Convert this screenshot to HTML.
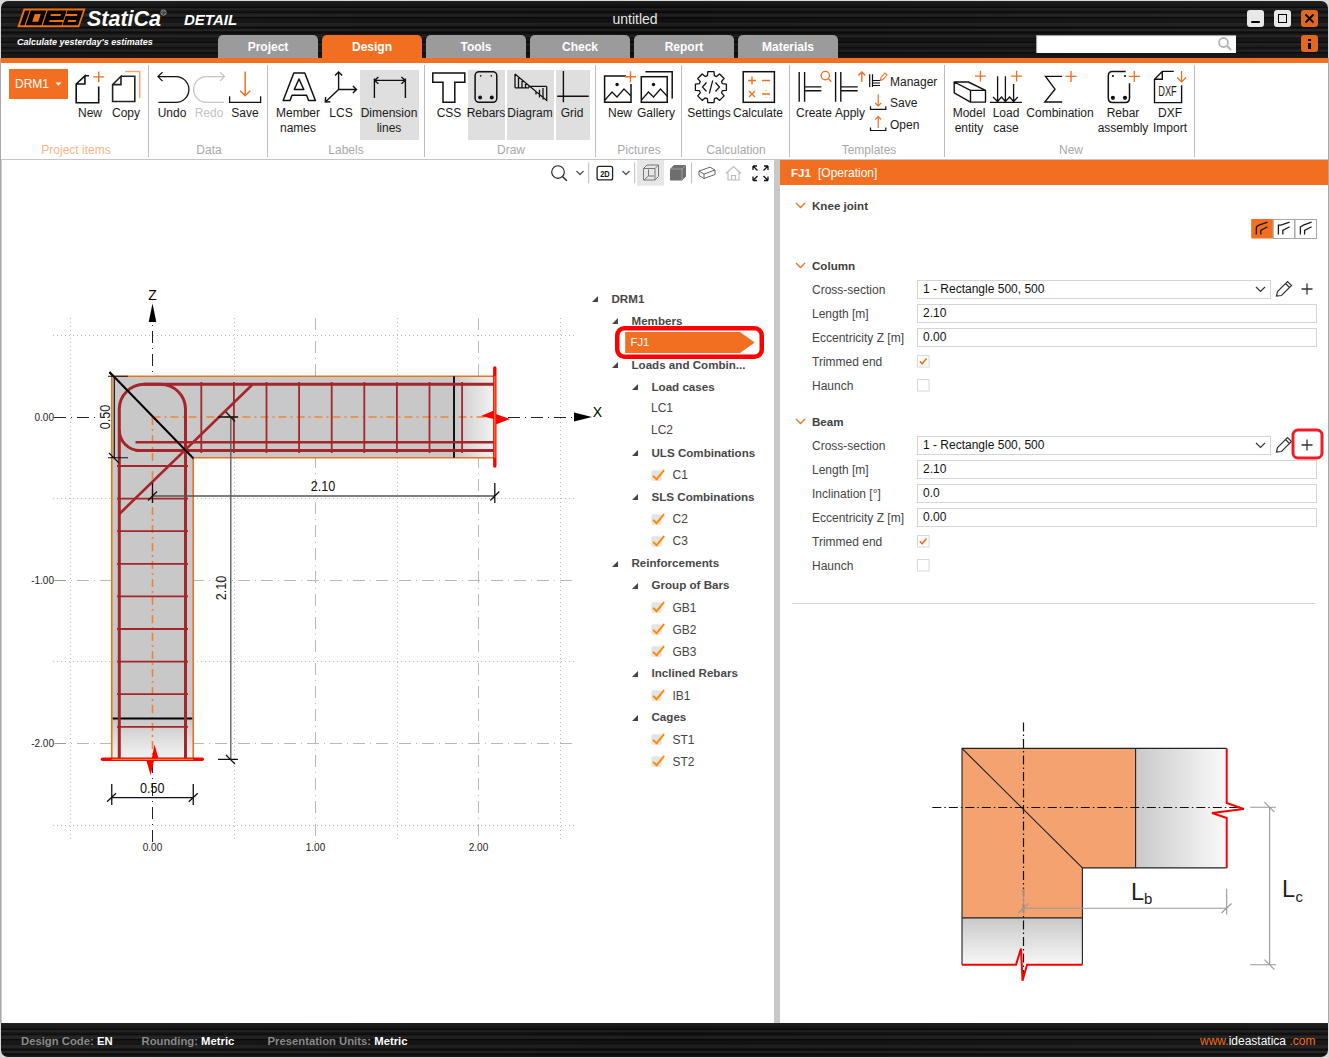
<!DOCTYPE html>
<html><head><meta charset="utf-8">
<style>
*{margin:0;padding:0;box-sizing:border-box}
html,body{width:1329px;height:1058px;overflow:hidden;background:#d9d9d9;font-family:"Liberation Sans",sans-serif;color:#222}
.a{position:absolute}
#win{position:absolute;left:0;top:0;width:1329px;height:1058px;overflow:hidden}
.dark{background-color:#121212;background-image:repeating-linear-gradient(180deg,rgba(255,255,255,0) 0px,rgba(255,255,255,.10) 1px,rgba(255,255,255,0) 2px,rgba(255,255,255,0) 7px),repeating-linear-gradient(180deg,rgba(0,0,0,0) 0px,rgba(0,0,0,.5) 1.5px,rgba(0,0,0,0) 3px,rgba(0,0,0,0) 5px),repeating-linear-gradient(180deg,rgba(255,255,255,0) 0px,rgba(255,255,255,.06) 2px,rgba(255,255,255,0) 4px,rgba(255,255,255,0) 11px),linear-gradient(90deg,rgba(255,255,255,.03),rgba(255,255,255,0) 50%,rgba(255,255,255,.03))}
.tab{position:absolute;top:35px;height:23px;width:100px;background:#9b9b9b;border-radius:5px 5px 0 0;color:#fff;font-weight:bold;font-size:12px;text-align:center;line-height:24px}
.tab.on{background:#f26f21}
.rt{position:absolute;font-size:12px;color:#1a1a1a;text-align:center;line-height:15px;white-space:nowrap}
.grp{position:absolute;top:143px;font-size:12px;color:#a8a8a8;text-align:center;white-space:nowrap;line-height:15px}
.div{position:absolute;top:65px;width:1px;height:92px;background:#bdbdbd}
.hl{position:absolute;background:#dfdfdf}
.tree{position:absolute;font-size:12px;color:#444;white-space:nowrap;line-height:15px}
.tree.b{font-weight:bold;color:#474747;font-size:11.6px}
.tri{position:absolute;width:0;height:0;border-left:6px solid transparent;border-bottom:6px solid #444}
.cb{position:absolute;width:12px;height:12px;background:#e6e6e6;border-radius:2px}
.lbl{position:absolute;left:32px;font-size:12px;color:#333;white-space:nowrap;line-height:15px}
.inp{position:absolute;left:137px;width:400px;height:19px;border:1px solid #d0d0d0;background:#fff;font-size:12px;color:#111;padding-left:5px;line-height:17px;white-space:nowrap}
.sec{position:absolute;left:32px;font-size:12px;font-weight:bold;color:#333;line-height:15px}
.chev{position:absolute;left:16px;width:9px;height:6px}
.chk{position:absolute;left:137px;width:13px;height:13px;border:1px solid #d6d6d6;background:#fff}
</style></head><body>
<div id="win">
  <div class="a" style="left:1px;top:58px;width:1327px;height:965px;background:#fff"></div>
  <div class="a dark" style="left:1px;top:1px;width:1327px;height:57px;border-radius:7px 7px 0 0"></div>
  <div class="a" style="left:1px;top:58px;width:1327px;height:5px;background:#f26f21"></div>
    <svg class="a" style="left:0;top:0" width="240" height="58" viewBox="0 0 240 58">
    <path d="M23.6 8.5 L85.5 8.5 L79.2 27.2 L17.3 27.2 Z" fill="#f0700f"/>
    <path d="M25.03 10.5 L29.53 10.5 L24.54 25.3 L20.04 25.3 Z M30.73 10.5 L46.43 10.5 L41.44 25.3 L25.74 25.3 Z M47.63 10.5 L66.63 10.5 L61.64 25.3 L42.64 25.3 Z M67.53 10.5 L83.03 10.5 L78.04 25.3 L62.54 25.3 Z" fill="#000"/>
    <path d="M34.75 14 L40.85 14 L38.22 21.8 L32.12 21.8 Z M51.05 14 L61.05 14 L60.37 16 L50.37 16 Z M49.83 20 L63.93 20 L63.25 22 L49.15 22 Z M65.95 14 L77.55 14 L76.87 16 L65.27 16 Z M68.23 20 L76.33 20 L75.65 22 L67.55 22 Z" fill="#f0700f"/>
    <text x="87" y="26" font-family="Liberation Sans" font-weight="bold" font-style="italic" font-size="21.5" fill="#fff">StatiCa</text>
    <circle cx="163.5" cy="12.5" r="2.6" fill="none" stroke="#bbb" stroke-width="0.8"/><text x="163.5" y="14.3" font-size="4" fill="#bbb" text-anchor="middle" font-family="Liberation Sans">R</text>
    <text x="184" y="25" font-family="Liberation Sans" font-weight="bold" font-style="italic" font-size="15" fill="#fff">DETAIL</text>
    <text x="17" y="44.5" font-family="Liberation Sans" font-weight="bold" font-style="italic" font-size="9" fill="#fff">Calculate yesterday's estimates</text>
  </svg>
  <div class="a" style="left:585px;top:10px;width:100px;text-align:center;color:#e6e6e6;font-size:14px;line-height:18px">untitled</div>
  <div class="a" style="left:1247px;top:10px;width:17px;height:17px;background:#e8e8e8;border-radius:3px"><div class="a" style="left:4px;top:11px;width:9px;height:2px;background:#000;border-radius:1px"></div></div>
  <div class="a" style="left:1274px;top:10px;width:17px;height:17px;background:#e8e8e8;border-radius:3px"><div class="a" style="left:4px;top:4px;width:9px;height:9px;border:1.5px solid #000"></div></div>
  <div class="a" style="left:1301px;top:10px;width:17px;height:17px;background:#e0691f;border-radius:3px"><svg class="a" style="left:0;top:0" width="17" height="17"><path d="M4.5 4.5 L12.5 12.5 M12.5 4.5 L4.5 12.5" stroke="#000" stroke-width="1.8"/></svg></div>
  <div class="a" style="left:1036px;top:35px;width:200px;height:18px;background:#fff;box-shadow:inset 1px 1px 1px #999"><svg class="a" style="left:180px;top:1px" width="18" height="16"><circle cx="7.5" cy="6.5" r="4.5" fill="none" stroke="#b5b5b5" stroke-width="1.8"/><path d="M10.8 9.8 L15 14" stroke="#b5b5b5" stroke-width="2.2"/></svg></div>
  <div class="a" style="left:1301px;top:35px;width:17px;height:17px;background:#e0691f;border-radius:3px"><div class="a" style="left:7px;top:4px;width:3px;height:2px;background:#000"></div><div class="a" style="left:7px;top:7.5px;width:3px;height:6px;background:#000"></div></div>
  <div class="tab" style="left:218px">Project</div>
  <div class="tab on" style="left:322px">Design</div>
  <div class="tab" style="left:426px">Tools</div>
  <div class="tab" style="left:530px">Check</div>
  <div class="tab" style="left:634px">Report</div>
  <div class="tab" style="left:738px">Materials</div>

  <div class="a" style="left:1px;top:159px;width:1327px;height:1px;background:#c6c6c6"></div>
    <div class="a" style="left:9px;top:69px;width:59px;height:30px;background:#f26f21;color:#fff;font-size:12px;line-height:30px;padding-left:6px">DRM1<svg class="a" style="left:46px;top:13px" width="7" height="5"><path d="M0.5 0.5 H6.5 L3.5 3.8Z" fill="#fff"/></svg></div>
  <div class="hl" style="left:360px;top:70px;width:59px;height:70px"></div>
  <div class="hl" style="left:468px;top:70px;width:37px;height:70px"></div>
  <div class="hl" style="left:507px;top:70px;width:47px;height:70px"></div>
  <div class="hl" style="left:556px;top:70px;width:34px;height:70px"></div>
  <div class="div" style="left:148px"></div>
  <div class="div" style="left:267px"></div>
  <div class="div" style="left:424px"></div>
  <div class="div" style="left:595px"></div>
  <div class="div" style="left:681px"></div>
  <div class="div" style="left:789px"></div>
  <div class="div" style="left:944px"></div>
  <div class="div" style="left:1194px"></div>
  <svg class="a" style="left:0;top:60px" width="1329" height="100" viewBox="0 60 1329 100" fill="none" stroke="#111" stroke-width="1.6">
    <!-- New -->
    <path d="M84.9 75.8 H89 M98.7 86.5 V102.7 H76.2 V84 L84.9 75.8 V84 H76.2"/>
    <path d="M93.3 76.9 H104.1 M98.7 71.5 V82.3" stroke="#f26f21" stroke-width="1.4"/>
    <!-- Copy -->
    <path d="M121 76.3 H134.8 V101.5 H112.6 V84.6 L121 76.3 V84.6 H112.6" stroke="#222"/>
    <path d="M125.2 71.4 H139.7 V98" stroke="#f9a36e" stroke-width="1.5"/>
    <!-- Undo -->
    <path d="M158 76.6 H176 A12.9 12.9 0 0 1 176 102.4 H158.4 M162.5 72.1 L158 76.6 L162.5 81.1" stroke-width="1.3"/>
    <!-- Redo -->
    <path d="M224.5 76.6 H206.5 A12.9 12.9 0 0 0 206.5 102.4 H224 M220 72.1 L224.5 76.6 L220 81.1" stroke="#c4c4c4" stroke-width="1.3"/>
    <!-- Save -->
    <path d="M245.2 71.6 V95.8 M240.2 90.8 L245.2 95.8 L250.2 90.8" stroke="#f26f21" stroke-width="1.5"/>
    <path d="M229.6 96.2 V102.4 H260.6 V96.2" stroke-width="1.3"/>
    <!-- Member names A -->
    <path d="M293.8 73 H304.8 L315.4 100.5 H308.6 L306.6 95.3 H292 L290 100.5 H283.2 Z M294.3 89.5 H303.8 L299 79 Z" stroke-width="1.5" stroke-linejoin="round"/>
    <!-- LCS -->
    <path d="M338.6 89.5 V72 M335 75.6 L338.6 72 L342.2 75.6 M338.6 89.5 H356.5 M352.9 85.9 L356.5 89.5 L352.9 93.1 M338.6 89.5 L325.3 102.1 M325.6 97 L325.3 102.1 L330.4 101.8" stroke-width="1.4"/>
    <!-- Dimension lines -->
    <path d="M374.4 78.5 V98 M405.4 78.5 V98 M374.4 80.4 H405.4 M378.4 77 L374.6 80.4 L378.4 83.8 M401.4 77 L405.2 80.4 L401.4 83.8" stroke-width="1.4"/>
    <!-- CSS T -->
    <path d="M432.8 73 H464.8 V82.3 H454.8 V102.3 H443 V82.3 H432.8 Z" stroke-width="1.5"/>
    <!-- Rebars -->
    <rect x="475.1" y="71.7" width="21.7" height="30.6" rx="4" stroke-width="1.5"/>
    <circle cx="480.7" cy="75.9" r="0.8" fill="#111" stroke="none"/><circle cx="491.3" cy="75.9" r="0.8" fill="#111" stroke="none"/>
    <circle cx="480.1" cy="97.6" r="2" fill="#111" stroke="none"/><circle cx="491.8" cy="97.6" r="2" fill="#111" stroke="none"/>
    <!-- Diagram -->
    <path d="M515 73.9 V87.8 M515 73.9 L546.7 100.4 V86.4 M518.5 76.8 V87.8 M522 79.8 V87.8 M525.5 82.7 V87.8 M529 85.6 V87.8 M536 90.8 V94.6 M539.5 89.8 V97.5 M543 88.1 V99.5 M515 87.8 H529 M530 86.4 H546.7" stroke-width="1.3"/>
    <!-- Grid -->
    <path d="M563.4 71 V102.3 M557.2 96.2 H588.7" stroke-width="1.4"/>
    <!-- Pictures New -->
    <path d="M626 76.1 H604.6 V102.3 H631 V84" stroke-width="1.5"/>
    <circle cx="617.1" cy="84.5" r="1.7" fill="#111" stroke="none"/>
    <path d="M605 100 L612 92 L617 97 L624 89 L631 96" stroke-width="1.2"/>
    <path d="M625 76.7 H636 M630.5 71.2 V82.2" stroke="#f26f21" stroke-width="1.4"/>
    <!-- Gallery -->
    <rect x="641.3" y="76.7" width="25.9" height="25.6" stroke-width="1.5"/>
    <path d="M645.5 71.7 H672.2 V98.4" stroke-width="1.5"/>
    <circle cx="653.5" cy="84.5" r="1.7" fill="#111" stroke="none"/>
    <path d="M641.5 100 L648.5 92 L653.5 97 L660.5 89 L667 96" stroke-width="1.2"/>
    <!-- Settings gear -->
    <path d="M722.4 83.7 L726.4 84.1 L726.4 90.3 L722.4 90.7 L721.5 92.8 L724.1 95.9 L719.6 100.4 L716.5 97.8 L714.4 98.7 L714.0 102.7 L707.8 102.7 L707.4 98.7 L705.3 97.8 L702.2 100.4 L697.7 95.9 L700.3 92.8 L699.4 90.7 L695.4 90.3 L695.4 84.1 L699.4 83.7 L700.3 81.6 L697.7 78.5 L702.2 74.0 L705.3 76.6 L707.4 75.7 L707.8 71.7 L714.0 71.7 L714.4 75.7 L716.5 76.6 L719.6 74.0 L724.1 78.5 L721.5 81.6 Z" stroke-width="1.3" stroke-linejoin="round"/>
    <path d="M706.5 82.5 L702.5 87 L706.5 91.5 M715.5 82.5 L719.5 87 L715.5 91.5 M712.7 80.5 L709.3 93.5" stroke-width="1.2"/>
    <!-- Calculate -->
    <rect x="743.2" y="71.7" width="31.2" height="30.6" stroke-width="1.5"/>
    <path d="M748 80.5 H756 M752 76.5 V84.5 M762 80.5 H770 M749 91 L755 97 M755 91 L749 97 M762 94 H770 M766 90.3 V90.8 M766 97.2 V97.7" stroke="#f26f21" stroke-width="1.4"/>
    <!-- Create -->
    <path d="M799.2 72 V101.7 M804.6 72 V101.7 M804.6 86.9 H821.3 M804.6 90.7 H821.3" stroke-width="1.4"/>
    <circle cx="825.3" cy="75.6" r="4.2" stroke="#f26f21" stroke-width="1.3"/><path d="M828.3 78.6 L831.3 81.8" stroke="#f26f21" stroke-width="1.4"/>
    <!-- Apply -->
    <path d="M835.6 72 V101.7 M840.8 72 V101.7 M840.8 86.9 H857.7 M840.8 90.7 H857.7" stroke-width="1.4"/>
    <path d="M861.8 72 V82 M858.3 75.5 L861.8 72 L865.3 75.5" stroke="#f26f21" stroke-width="1.4"/>
    <!-- Manager small -->
    <path d="M869.7 74.2 V87 M872.5 74.2 V87 M872.5 80.5 H880 M872.5 83 H880 M872.5 85.5 H880" stroke-width="1.2"/>
    <path d="M880.5 80.5 L881 77.5 L885 73 L887 75 L883 79.5 Z" stroke="#f26f21" stroke-width="1.1"/>
    <!-- Save small -->
    <path d="M878.2 94.3 V106 M875.2 103 L878.2 106 L881.2 103" stroke="#f26f21" stroke-width="1.2"/>
    <path d="M870.5 106.3 V109.3 H885.8 V106.3" stroke-width="1.2"/>
    <!-- Open small -->
    <path d="M878.2 128 V116.5 M875.2 119.5 L878.2 116.5 L881.2 119.5" stroke="#f26f21" stroke-width="1.2"/>
    <path d="M870.5 127.5 V130.5 H885.8 V127.5" stroke-width="1.2"/>
    <!-- Model entity box -->
    <path d="M954.2 82 H968.4 L985.5 90.4 V102.1 H970.5 L954.2 92.8 Z M954.2 82 L970.5 90.4 H985.5 M970.5 90.4 V102.1" stroke-width="1.4" stroke-linejoin="round"/>
    <path d="M975 76.2 H985.8 M980.4 70.8 V81.6" stroke="#f26f21" stroke-width="1.3"/>
    <!-- Load case -->
    <path d="M997.6 76.2 V101.5 M1005.4 76.2 V101.5 M1013.6 84 V101.5 M993 97 L997.6 101.5 L1001.5 97 L1005.4 101.5 L1009.6 97 L1013.6 101.5 L1017.8 97 M990 102.4 H1022" stroke-width="1.3"/>
    <path d="M1011.2 76.2 H1022 M1016.6 70.8 V81.6" stroke="#f26f21" stroke-width="1.3"/>
    <!-- Combination sigma -->
    <path d="M1062.2 76.4 H1045.5 L1055 89.2 L1044.8 102 H1062.2" stroke-width="1.4"/>
    <path d="M1065.5 76.4 H1076.5 M1071 70.9 V81.9" stroke="#f26f21" stroke-width="1.4"/>
    <!-- Rebar assembly -->
    <path d="M1125.7 71.5 H1112.5 Q1108.3 71.5 1108.3 75.7 V98.2 Q1108.3 102.4 1112.5 102.4 H1125.3 Q1129.5 102.4 1129.5 98.2 V83.3" stroke-width="1.5"/>
    <circle cx="1112.9" cy="76" r="1.1" fill="#111" stroke="none"/><circle cx="1125" cy="76" r="1.1" fill="#111" stroke="none"/>
    <circle cx="1112.9" cy="97.8" r="2.1" fill="#111" stroke="none"/><circle cx="1125" cy="97.8" r="2.1" fill="#111" stroke="none"/>
    <path d="M1128.8 76.4 H1139.8 M1134.3 70.9 V81.9" stroke="#f26f21" stroke-width="1.3"/>
    <!-- DXF -->
    <path d="M1173.8 71.4 H1162.3 L1154.5 79.2 V102.6 H1181.6 V85.3 M1154.5 79.2 H1162.3 V71.4" stroke-width="1.4"/>
    <text x="1158.2" y="95.8" font-family="Liberation Sans" font-size="14" fill="#222" stroke="none" textLength="18.6" lengthAdjust="spacingAndGlyphs">DXF</text>
    <path d="M1181.6 71 V81.9 M1177.2 77.5 L1181.6 81.9 L1186 77.5" stroke="#f26f21" stroke-width="1.3"/>
  </svg>
  <div class="rt" style="left:60px;top:106px;width:60px">New</div>
  <div class="rt" style="left:96px;top:106px;width:60px">Copy</div>
  <div class="rt" style="left:142px;top:106px;width:60px">Undo</div>
  <div class="rt" style="left:179px;top:106px;width:60px;color:#c4c4c4">Redo</div>
  <div class="rt" style="left:215px;top:106px;width:60px">Save</div>
  <div class="rt" style="left:268px;top:106px;width:60px">Member<br>names</div>
  <div class="rt" style="left:311px;top:106px;width:60px">LCS</div>
  <div class="rt" style="left:359px;top:106px;width:60px">Dimension<br>lines</div>
  <div class="rt" style="left:419px;top:106px;width:60px">CSS</div>
  <div class="rt" style="left:456px;top:106px;width:60px">Rebars</div>
  <div class="rt" style="left:500px;top:106px;width:60px">Diagram</div>
  <div class="rt" style="left:542px;top:106px;width:60px">Grid</div>
  <div class="rt" style="left:590px;top:106px;width:60px">New</div>
  <div class="rt" style="left:626px;top:106px;width:60px">Gallery</div>
  <div class="rt" style="left:679px;top:106px;width:60px">Settings</div>
  <div class="rt" style="left:728px;top:106px;width:60px">Calculate</div>
  <div class="rt" style="left:784px;top:106px;width:60px">Create</div>
  <div class="rt" style="left:820px;top:106px;width:60px">Apply</div>
  <div class="rt" style="left:890px;top:75px;text-align:left">Manager</div>
  <div class="rt" style="left:890px;top:96px;text-align:left">Save</div>
  <div class="rt" style="left:890px;top:118px;text-align:left">Open</div>
  <div class="rt" style="left:939px;top:106px;width:60px">Model<br>entity</div>
  <div class="rt" style="left:976px;top:106px;width:60px">Load<br>case</div>
  <div class="rt" style="left:1020px;top:106px;width:80px">Combination</div>
  <div class="rt" style="left:1093px;top:106px;width:60px">Rebar<br>assembly</div>
  <div class="rt" style="left:1140px;top:106px;width:60px">DXF<br>Import</div>
  <div class="grp" style="left:26px;width:100px;color:#f8b48a">Project items</div>
  <div class="grp" style="left:159px;width:100px">Data</div>
  <div class="grp" style="left:296px;width:100px">Labels</div>
  <div class="grp" style="left:461px;width:100px">Draw</div>
  <div class="grp" style="left:589px;width:100px">Pictures</div>
  <div class="grp" style="left:686px;width:100px">Calculation</div>
  <div class="grp" style="left:819px;width:100px">Templates</div>
  <div class="grp" style="left:1021px;width:100px">New</div>

  <div class="a" style="left:0;top:58px;width:1px;height:965px;background:#a9a9a9"></div><div class="a" style="left:1px;top:160px;width:1px;height:863px;background:#d0d0d0"></div>
  <div class="a" style="left:774px;top:160px;width:6px;height:863px;background:#c8c8c8"></div>
  <div class="a" style="left:1328px;top:58px;width:1px;height:965px;background:#a9a9a9"></div>
  <svg class="a" style="left:0;top:160px" width="774" height="862" viewBox="0 160 774 862">
<defs><linearGradient id="gb" x1="0" x2="1" y1="0" y2="0"><stop offset="0" stop-color="#c8c8c8"/><stop offset="1" stop-color="#f4f4f4"/></linearGradient>
<linearGradient id="gc" x1="0" x2="0" y1="0" y2="1"><stop offset="0" stop-color="#c8c8c8"/><stop offset="1" stop-color="#f4f4f4"/></linearGradient></defs>
<path d="M70.5 318 V842" stroke="#b8b8b8" stroke-width="1" stroke-dasharray="1 3"/>
<path d="M234.5 318 V842" stroke="#b8b8b8" stroke-width="1" stroke-dasharray="1 3"/>
<path d="M397.5 318 V842" stroke="#b8b8b8" stroke-width="1" stroke-dasharray="1 3"/>
<path d="M560.5 318 V842" stroke="#b8b8b8" stroke-width="1" stroke-dasharray="1 3"/>
<path d="M53 335.5 H577" stroke="#b8b8b8" stroke-width="1" stroke-dasharray="1 3"/>
<path d="M53 498.5 H577" stroke="#b8b8b8" stroke-width="1" stroke-dasharray="1 3"/>
<path d="M53 661.5 H577" stroke="#b8b8b8" stroke-width="1" stroke-dasharray="1 3"/>
<path d="M53 825.5 H577" stroke="#b8b8b8" stroke-width="1" stroke-dasharray="1 3"/>
<path d="M315.5 318 V842" stroke="#b8b8b8" stroke-width="1" stroke-dasharray="12 5 1 5"/>
<path d="M478.5 318 V842" stroke="#b8b8b8" stroke-width="1" stroke-dasharray="12 5 1 5"/>
<path d="M54 580.5 H577" stroke="#b8b8b8" stroke-width="1" stroke-dasharray="12 5 1 5"/>
<path d="M54 743.5 H577" stroke="#b8b8b8" stroke-width="1" stroke-dasharray="12 5 1 5"/>
<path d="M152.5 323 V377" stroke="#222" stroke-width="1" stroke-dasharray="12 5 1 5" stroke-dashoffset="15"/>
<path d="M152.5 761 V842" stroke="#222" stroke-width="1" stroke-dasharray="12 5 1 5"/>
<path d="M54 417.5 H96" stroke="#222" stroke-width="1" stroke-dasharray="12 5 1 5"/>
<path d="M508 417.5 H574" stroke="#222" stroke-width="1" stroke-dasharray="12 5 1 5"/>
<path d="M111.75 376.25 H494.8 V457.75 H193.25 V759.3 H111.75 Z" fill="#c8c8c8"/>
<rect x="454" y="376.25" width="40.80000000000001" height="81.5" fill="url(#gb)"/>
<rect x="111.75" y="719" width="81.5" height="40.299999999999955" fill="url(#gc)"/>
<path d="M111.75 376.25 H494.8 V457.75 H193.25 V759.3 H111.75 Z" fill="none" stroke="#e8731f" stroke-width="1.6"/>
<path d="M152.5 417.0 H494.8" stroke="#f08232" stroke-width="1.6" stroke-dasharray="8 4 2 4"/>
<path d="M152.5 417.0 V759.3" stroke="#f08232" stroke-width="1.6" stroke-dasharray="8 4 2 4"/>
<path d="M454 376.25 V457.75" stroke="#000" stroke-width="1.8"/>
<path d="M112.75 718.5 H192.25" stroke="#000" stroke-width="1.8"/>
<path d="M201.3 382 V453" stroke="#a5262a" stroke-width="1.8"/>
<path d="M233.9 382 V453" stroke="#a5262a" stroke-width="1.8"/>
<path d="M266.5 382 V453" stroke="#a5262a" stroke-width="1.8"/>
<path d="M299.1 382 V453" stroke="#a5262a" stroke-width="1.8"/>
<path d="M331.7 382 V453" stroke="#a5262a" stroke-width="1.8"/>
<path d="M364.3 382 V453" stroke="#a5262a" stroke-width="1.8"/>
<path d="M396.9 382 V453" stroke="#a5262a" stroke-width="1.8"/>
<path d="M429.5 382 V453" stroke="#a5262a" stroke-width="1.8"/>
<path d="M462.1 382 V453" stroke="#a5262a" stroke-width="1.8"/>
<path d="M117 466.0 H188" stroke="#a5262a" stroke-width="1.8"/>
<path d="M117 498.6 H188" stroke="#a5262a" stroke-width="1.8"/>
<path d="M117 531.2 H188" stroke="#a5262a" stroke-width="1.8"/>
<path d="M117 563.8 H188" stroke="#a5262a" stroke-width="1.8"/>
<path d="M117 596.4 H188" stroke="#a5262a" stroke-width="1.8"/>
<path d="M117 629.0 H188" stroke="#a5262a" stroke-width="1.8"/>
<path d="M117 661.6 H188" stroke="#a5262a" stroke-width="1.8"/>
<path d="M117 694.2 H188" stroke="#a5262a" stroke-width="1.8"/>
<path d="M117 726.8 H188" stroke="#a5262a" stroke-width="1.8"/>
<path d="M119.3 759.3 V409 A25 25 0 0 1 144.3 384.2 H494.8" fill="none" stroke="#a5262a" stroke-width="3"/>
<path d="M185.5 759.3 V409 A25 25 0 0 0 160.5 384.2 H144" fill="none" stroke="#a5262a" stroke-width="3"/>
<path d="M119.3 430 A20.5 20.5 0 0 0 139.8 450.5 H494.8" fill="none" stroke="#a5262a" stroke-width="3"/>
<path d="M135.5 450.5 H140" fill="none" stroke="#a5262a" stroke-width="3"/>
<path d="M135.5 442.2 H494.8" fill="none" stroke="#a5262a" stroke-width="2.6"/>
<path d="M119.3 514 L252.5 384.5" stroke="#a5262a" stroke-width="2.6"/>
<path d="M109.5 372 L193.5 458.5" stroke="#000" stroke-width="2"/>
<path d="M494.8 368 V466" stroke="#ff0000" stroke-width="3.4" stroke-linecap="round"/>
<path d="M493.8 410.5 L481 416 L493.8 419 Z M495.8 414 L510 419 L495.8 424.5 Z" fill="#ff0000"/>
<path d="M102.5 759.3 H202.3" stroke="#ff0000" stroke-width="3.4" stroke-linecap="round"/>
<path d="M151.8 758.5 L154.5 744.5 L158.5 758.5 Z M146.5 761 L150.7 775.2 L154 761 Z" fill="#ff0000"/>
<path d="M494.8 376.25 V457.75" stroke="#f08232" stroke-width="1.2"/>
<path d="M111.75 759.3 H193.25" stroke="#f08232" stroke-width="1.2"/>
<path d="M114.3 376.25 V457.75 M108 376.25 H128 M108 457.75 H128 M109 372.5 L119 381.5 M109 453 L119 463" stroke="#111" stroke-width="1.2" fill="none"/>
<text x="0" y="0" transform="translate(109.7 417) rotate(-90)" text-anchor="middle" font-size="13.8" textLength="24.6" lengthAdjust="spacingAndGlyphs" fill="#111">0.50</text>
<path d="M152.5 496 H494.8" stroke="#555" stroke-width="1.3"/>
<path d="M152.5 483 V503 M494.8 483 V503 M148 500.5 L157 491.5 M490.3 500.5 L499.3 491.5" stroke="#111" stroke-width="1.3"/>
<text x="323" y="491" text-anchor="middle" font-size="13.8" textLength="24.6" lengthAdjust="spacingAndGlyphs" fill="#111">2.10</text>
<path d="M230.8 417.0 V759.3" stroke="#555" stroke-width="1.3"/>
<path d="M218 417.0 H238 M218 759.3 H238 M226 412 L235 421.5 M226 755 L235 764" stroke="#111" stroke-width="1.3"/>
<text x="0" y="0" transform="translate(226 588) rotate(-90)" text-anchor="middle" font-size="13.8" textLength="24.6" lengthAdjust="spacingAndGlyphs" fill="#111">2.10</text>
<path d="M111.75 797.6 H193.25 M111.75 784 V805 M193.25 784 V805 M107 801.8 L116 793.3 M188.75 801.8 L197.75 793.3" stroke="#111" stroke-width="1.3"/>
<text x="152.3" y="793" text-anchor="middle" font-size="13.8" textLength="24.6" lengthAdjust="spacingAndGlyphs" fill="#111">0.50</text>
<path d="M152.5 303.5 L156.3 322 H148.7 Z" fill="#000"/>
<text x="152.5" y="300" text-anchor="middle" font-size="14" fill="#000">Z</text>
<path d="M592 417 L574 412.5 V421.5 Z" fill="#000"/>
<text x="597.5" y="417" text-anchor="middle" font-size="14" fill="#000">X</text>
<text x="54" y="421.3" text-anchor="end" font-size="10" fill="#222">0.00</text>
<text x="54" y="584.3" text-anchor="end" font-size="10" fill="#222">-1.00</text>
<path d="M55 580.5 H66" stroke="#9a9a9a" stroke-width="1"/>
<text x="54" y="747.3" text-anchor="end" font-size="10" fill="#222">-2.00</text>
<path d="M55 743.5 H66" stroke="#9a9a9a" stroke-width="1"/>
<text x="152.5" y="850.5" text-anchor="middle" font-size="10" fill="#222">0.00</text>
<text x="315.5" y="850.5" text-anchor="middle" font-size="10" fill="#222">1.00</text>
<text x="478.5" y="850.5" text-anchor="middle" font-size="10" fill="#222">2.00</text>
</svg>
  <svg class="a" style="left:540px;top:159px" width="234" height="30" viewBox="540 159 234 30" fill="none" stroke="#222" stroke-width="1.3">
<rect x="637" y="160" width="27" height="25.7" fill="#e6e6e6" stroke="none"/>
<circle cx="558" cy="172" r="6.3" stroke-width="1.15"/><path d="M562.5 176.5 L566.8 180.8" stroke-width="1.4"/>
<path d="M576.5 171 L580 174.5 L583.5 171" stroke="#555"/>
<path d="M588.7 162.4 V183.4 M634.7 162.4 V183.4 M691.6 162.4 V183.4" stroke="#bbb" stroke-width="1"/>
<rect x="597.1" y="166.4" width="15.5" height="13.5" rx="2" stroke-width="1.3"/>
<text x="604.9" y="176.6" font-family="Liberation Sans" font-weight="bold" font-size="8.6" fill="#111" stroke="none" text-anchor="middle" textLength="9.5" lengthAdjust="spacingAndGlyphs">2D</text>
<path d="M622.5 171 L626 174.5 L629.5 171" stroke="#555"/>
<path d="M643.5 168.5 L647 165 H658.5 V176.5 L655 180 H643.5 Z M643.5 168.5 H655 V180 M655 168.5 L658.5 165 M648.5 169.5 V176 H654 M648.5 176 L644 180" stroke="#777" stroke-width="1"/>
<path d="M670 169 L674 165 H686 V176.5 L682 180.5 H670 Z" fill="#6e6e6e" stroke="none"/>
<path d="M670 169 H682 V180.5 M682 169 L686 165" stroke="#aaa" stroke-width="0.8"/>
<path d="M699 171 L710 167.2 L715 170 V174.5 L704 178.5 L699 175.5 Z M699 171 L704 174 L715 170 M704 174 V178.5" stroke="#666" stroke-width="1"/>
<path d="M726 173.5 L733.5 166.5 L741 173.5 M728 172 V180 H739 V172 M731.5 180 V175.5 H735.5 V180" stroke="#bbb" stroke-width="1.1"/>
<path d="M753 166 L757.5 170.5 M753 166 H757 M753 166 V170 M768 166 L763.5 170.5 M768 166 H764 M768 166 V170 M753 180.5 L757.5 176 M753 180.5 H757 M753 180.5 V176.5 M768 180.5 L763.5 176 M768 180.5 H764 M768 180.5 V176.5" stroke="#111" stroke-width="1.3"/>
</svg>
<svg class="a" style="left:591px;top:295px" width="8" height="8"><path d="M7 1 V7 H1 Z" fill="#444"/></svg>
<div class="tree b" style="left:611.5px;top:290.5px">DRM1</div>
<svg class="a" style="left:611px;top:317px" width="8" height="8"><path d="M7 1 V7 H1 Z" fill="#444"/></svg>
<div class="tree b" style="left:631.5px;top:312.5px">Members</div>
<svg class="a" style="left:611px;top:361px" width="8" height="8"><path d="M7 1 V7 H1 Z" fill="#444"/></svg>
<div class="tree b" style="left:631.5px;top:356.5px">Loads and Combin...</div>
<svg class="a" style="left:631px;top:383px" width="8" height="8"><path d="M7 1 V7 H1 Z" fill="#444"/></svg>
<div class="tree b" style="left:651.5px;top:378.5px">Load cases</div>
<div class="tree" style="left:651px;top:400.5px">LC1</div>
<div class="tree" style="left:651px;top:422.5px">LC2</div>
<svg class="a" style="left:631px;top:449px" width="8" height="8"><path d="M7 1 V7 H1 Z" fill="#444"/></svg>
<div class="tree b" style="left:651.5px;top:444.5px">ULS Combinations</div>
<svg class="a" style="left:651px;top:468px" width="15" height="14"><rect x="0.3" y="2.3" width="10.5" height="10.8" rx="2" fill="#e4e4e4"/><path d="M2.6 8.4 L5.6 11.4 L12.6 2.6" fill="none" stroke="#ff8a00" stroke-width="2" stroke-linecap="round" stroke-linejoin="round"/></svg>
<div class="tree" style="left:672.5px;top:468.0px">C1</div>
<svg class="a" style="left:631px;top:493px" width="8" height="8"><path d="M7 1 V7 H1 Z" fill="#444"/></svg>
<div class="tree b" style="left:651.5px;top:488.7px">SLS Combinations</div>
<svg class="a" style="left:651px;top:512px" width="15" height="14"><rect x="0.3" y="2.3" width="10.5" height="10.8" rx="2" fill="#e4e4e4"/><path d="M2.6 8.4 L5.6 11.4 L12.6 2.6" fill="none" stroke="#ff8a00" stroke-width="2" stroke-linecap="round" stroke-linejoin="round"/></svg>
<div class="tree" style="left:672.5px;top:512.0px">C2</div>
<svg class="a" style="left:651px;top:534px" width="15" height="14"><rect x="0.3" y="2.3" width="10.5" height="10.8" rx="2" fill="#e4e4e4"/><path d="M2.6 8.4 L5.6 11.4 L12.6 2.6" fill="none" stroke="#ff8a00" stroke-width="2" stroke-linecap="round" stroke-linejoin="round"/></svg>
<div class="tree" style="left:672.5px;top:534.0px">C3</div>
<svg class="a" style="left:611px;top:560px" width="8" height="8"><path d="M7 1 V7 H1 Z" fill="#444"/></svg>
<div class="tree b" style="left:631.5px;top:555px">Reinforcements</div>
<svg class="a" style="left:631px;top:582px" width="8" height="8"><path d="M7 1 V7 H1 Z" fill="#444"/></svg>
<div class="tree b" style="left:651.5px;top:577px">Group of Bars</div>
<svg class="a" style="left:651px;top:600px" width="15" height="14"><rect x="0.3" y="2.3" width="10.5" height="10.8" rx="2" fill="#e4e4e4"/><path d="M2.6 8.4 L5.6 11.4 L12.6 2.6" fill="none" stroke="#ff8a00" stroke-width="2" stroke-linecap="round" stroke-linejoin="round"/></svg>
<div class="tree" style="left:672.5px;top:600.5px">GB1</div>
<svg class="a" style="left:651px;top:622px" width="15" height="14"><rect x="0.3" y="2.3" width="10.5" height="10.8" rx="2" fill="#e4e4e4"/><path d="M2.6 8.4 L5.6 11.4 L12.6 2.6" fill="none" stroke="#ff8a00" stroke-width="2" stroke-linecap="round" stroke-linejoin="round"/></svg>
<div class="tree" style="left:672.5px;top:622.5px">GB2</div>
<svg class="a" style="left:651px;top:644px" width="15" height="14"><rect x="0.3" y="2.3" width="10.5" height="10.8" rx="2" fill="#e4e4e4"/><path d="M2.6 8.4 L5.6 11.4 L12.6 2.6" fill="none" stroke="#ff8a00" stroke-width="2" stroke-linecap="round" stroke-linejoin="round"/></svg>
<div class="tree" style="left:672.5px;top:644.5px">GB3</div>
<svg class="a" style="left:631px;top:670px" width="8" height="8"><path d="M7 1 V7 H1 Z" fill="#444"/></svg>
<div class="tree b" style="left:651.5px;top:665px">Inclined Rebars</div>
<svg class="a" style="left:651px;top:688px" width="15" height="14"><rect x="0.3" y="2.3" width="10.5" height="10.8" rx="2" fill="#e4e4e4"/><path d="M2.6 8.4 L5.6 11.4 L12.6 2.6" fill="none" stroke="#ff8a00" stroke-width="2" stroke-linecap="round" stroke-linejoin="round"/></svg>
<div class="tree" style="left:672.5px;top:688.5px">IB1</div>
<svg class="a" style="left:631px;top:714px" width="8" height="8"><path d="M7 1 V7 H1 Z" fill="#444"/></svg>
<div class="tree b" style="left:651.5px;top:709px">Cages</div>
<svg class="a" style="left:651px;top:732px" width="15" height="14"><rect x="0.3" y="2.3" width="10.5" height="10.8" rx="2" fill="#e4e4e4"/><path d="M2.6 8.4 L5.6 11.4 L12.6 2.6" fill="none" stroke="#ff8a00" stroke-width="2" stroke-linecap="round" stroke-linejoin="round"/></svg>
<div class="tree" style="left:672.5px;top:732.5px">ST1</div>
<svg class="a" style="left:651px;top:754px" width="15" height="14"><rect x="0.3" y="2.3" width="10.5" height="10.8" rx="2" fill="#e4e4e4"/><path d="M2.6 8.4 L5.6 11.4 L12.6 2.6" fill="none" stroke="#ff8a00" stroke-width="2" stroke-linecap="round" stroke-linejoin="round"/></svg>
<div class="tree" style="left:672.5px;top:754.5px">ST2</div>
<svg class="a" style="left:613px;top:324px" width="154" height="38"><path d="M12.2 8 H127 L141.7 18.5 L127 29 H12.2 Z" fill="#f26f21"/><rect x="4.25" y="4.25" width="144.5" height="28.5" rx="7" fill="none" stroke="#f00" stroke-width="4.5"/></svg>
<div class="tree" style="left:630.5px;top:335px;color:#fff;font-size:11.3px">FJ1</div>
  <div class="a dark" style="left:1px;top:1023px;width:1327px;height:34px;border-radius:0 0 7px 7px"></div>
  <div class="a" style="left:780px;top:160px;width:548px;height:25px;background:#f26f21"></div>
<div class="a" style="left:791px;top:166px;font-size:12px;line-height:15px;color:#fff;white-space:nowrap"><b style="font-size:11.5px">FJ1</b></div>
<div class="a" style="left:818px;top:166px;font-size:12px;line-height:15px;color:#fff;white-space:nowrap">[Operation]</div>
<svg class="a" style="left:795px;top:202px" width="11" height="7"><path d="M1 1 L5.5 5.5 L10 1" fill="none" stroke="#f26f21" stroke-width="1.3"/></svg>
<div class="a" style="left:812px;top:198px;font-size:11.6px;font-weight:bold;color:#404040;line-height:15px">Knee joint</div>
<svg class="a" style="left:1250px;top:219px" width="68" height="21" viewBox="1250 219 68 21">
<rect x="1251.2" y="219" width="21.7" height="19.5" fill="#f26f21"/><rect x="1273.3" y="219.5" width="21.2" height="19" fill="#fff" stroke="#a8a8a8"/><rect x="1295" y="219.5" width="21.5" height="19" fill="#fff" stroke="#a8a8a8"/>
<path d="M1256.3 234.4 V228.5 Q1256.3 226 1259 225.2 L1267.5 222.2 M1260.8 234.4 V230.5 L1267.5 226.7" fill="none" stroke="#1a1a1a" stroke-width="1.3"/>
<path d="M1278.4 234.4 V225.1 H1280.9 L1289.6 222.2 M1282.8 234.4 V230.5 L1289.6 226.7" fill="none" stroke="#1a1a1a" stroke-width="1.3"/>
<path d="M1300.4 234.4 V227 L1303.3 225.1 L1311.6 222.2 M1304.6 234.4 V230.5 L1311.6 226.7" fill="none" stroke="#1a1a1a" stroke-width="1.3"/>
</svg>
<svg class="a" style="left:795px;top:261.8px" width="11" height="7"><path d="M1 1 L5.5 5.5 L10 1" fill="none" stroke="#f26f21" stroke-width="1.3"/></svg>
<div class="a" style="left:812px;top:257.8px;font-size:11.6px;font-weight:bold;color:#404040;line-height:15px">Column</div>
<div class="a" style="left:812px;top:282.5px;font-size:12px;color:#444;line-height:15px;white-space:nowrap">Cross-section</div>
<div class="a" style="left:917px;top:279.5px;width:354px;height:19px;border:1px solid #d5d5d5;background:#fff;font-size:12px;color:#111;padding-left:5px;line-height:17px;white-space:nowrap">1 - Rectangle 500, 500</div>
<svg class="a" style="left:1255px;top:286px" width="11" height="7"><path d="M1 1 L5.5 5.5 L10 1" fill="none" stroke="#333" stroke-width="1.2"/></svg>
<svg class="a" style="left:1274px;top:280px" width="20" height="18"><path d="M2.5 16 L3.5 11.5 L13.5 1.5 L17.5 5.5 L7.5 15.5 Z M11.5 3.5 L15.5 7.5" fill="none" stroke="#333" stroke-width="1.2"/></svg>
<svg class="a" style="left:1300px;top:282px" width="14" height="14"><path d="M7 1.5 V12.5 M1.5 7 H12.5" stroke="#333" stroke-width="1.3"/></svg>
<div class="a" style="left:812px;top:306.5px;font-size:12px;color:#444;line-height:15px;white-space:nowrap">Length [m]</div>
<div class="a" style="left:917px;top:303.5px;width:400px;height:19px;border:1px solid #d5d5d5;background:#fff;font-size:12px;color:#111;padding-left:5px;line-height:17px;white-space:nowrap">2.10</div>
<div class="a" style="left:812px;top:330.5px;font-size:12px;color:#444;line-height:15px;white-space:nowrap">Eccentricity Z [m]</div>
<div class="a" style="left:917px;top:327.5px;width:400px;height:19px;border:1px solid #d5d5d5;background:#fff;font-size:12px;color:#111;padding-left:5px;line-height:17px;white-space:nowrap">0.00</div>
<div class="a" style="left:812px;top:354.5px;font-size:12px;color:#444;line-height:15px;white-space:nowrap">Trimmed end</div>
<svg class="a" style="left:917px;top:355px" width="13" height="13"><rect x="0.5" y="0.5" width="11.5" height="11.5" fill="#fff" stroke="#d8d8d8"/><path d="M2.8 6.3 L5.2 8.8 L9.5 3.6" fill="none" stroke="#f26f21" stroke-width="1.6"/></svg>
<div class="a" style="left:812px;top:378.5px;font-size:12px;color:#444;line-height:15px;white-space:nowrap">Haunch</div>
<svg class="a" style="left:917px;top:379px" width="13" height="13"><rect x="0.5" y="0.5" width="11.5" height="11.5" fill="#fff" stroke="#d8d8d8"/></svg>
<svg class="a" style="left:795px;top:417.8px" width="11" height="7"><path d="M1 1 L5.5 5.5 L10 1" fill="none" stroke="#f26f21" stroke-width="1.3"/></svg>
<div class="a" style="left:812px;top:413.8px;font-size:11.6px;font-weight:bold;color:#404040;line-height:15px">Beam</div>
<div class="a" style="left:812px;top:438.5px;font-size:12px;color:#444;line-height:15px;white-space:nowrap">Cross-section</div>
<div class="a" style="left:917px;top:435.5px;width:354px;height:19px;border:1px solid #d5d5d5;background:#fff;font-size:12px;color:#111;padding-left:5px;line-height:17px;white-space:nowrap">1 - Rectangle 500, 500</div>
<svg class="a" style="left:1255px;top:442px" width="11" height="7"><path d="M1 1 L5.5 5.5 L10 1" fill="none" stroke="#333" stroke-width="1.2"/></svg>
<svg class="a" style="left:1274px;top:436px" width="20" height="18"><path d="M2.5 16 L3.5 11.5 L13.5 1.5 L17.5 5.5 L7.5 15.5 Z M11.5 3.5 L15.5 7.5" fill="none" stroke="#333" stroke-width="1.2"/></svg>
<svg class="a" style="left:1300px;top:438px" width="14" height="14"><path d="M7 1.5 V12.5 M1.5 7 H12.5" stroke="#333" stroke-width="1.3"/></svg>
<div class="a" style="left:812px;top:462.5px;font-size:12px;color:#444;line-height:15px;white-space:nowrap">Length [m]</div>
<div class="a" style="left:917px;top:459.5px;width:400px;height:19px;border:1px solid #d5d5d5;background:#fff;font-size:12px;color:#111;padding-left:5px;line-height:17px;white-space:nowrap">2.10</div>
<div class="a" style="left:812px;top:486.5px;font-size:12px;color:#444;line-height:15px;white-space:nowrap">Inclination [°]</div>
<div class="a" style="left:917px;top:483.5px;width:400px;height:19px;border:1px solid #d5d5d5;background:#fff;font-size:12px;color:#111;padding-left:5px;line-height:17px;white-space:nowrap">0.0</div>
<div class="a" style="left:812px;top:510.5px;font-size:12px;color:#444;line-height:15px;white-space:nowrap">Eccentricity Z [m]</div>
<div class="a" style="left:917px;top:507.5px;width:400px;height:19px;border:1px solid #d5d5d5;background:#fff;font-size:12px;color:#111;padding-left:5px;line-height:17px;white-space:nowrap">0.00</div>
<div class="a" style="left:812px;top:534.5px;font-size:12px;color:#444;line-height:15px;white-space:nowrap">Trimmed end</div>
<svg class="a" style="left:917px;top:535px" width="13" height="13"><rect x="0.5" y="0.5" width="11.5" height="11.5" fill="#fff" stroke="#d8d8d8"/><path d="M2.8 6.3 L5.2 8.8 L9.5 3.6" fill="none" stroke="#f26f21" stroke-width="1.6"/></svg>
<div class="a" style="left:812px;top:558.5px;font-size:12px;color:#444;line-height:15px;white-space:nowrap">Haunch</div>
<svg class="a" style="left:917px;top:559px" width="13" height="13"><rect x="0.5" y="0.5" width="11.5" height="11.5" fill="#fff" stroke="#d8d8d8"/></svg>
<svg class="a" style="left:1291px;top:428px" width="33" height="32"><rect x="2" y="2" width="29" height="28" rx="5" fill="none" stroke="#ee1c25" stroke-width="3"/></svg>
<div class="a" style="left:792px;top:603px;width:523px;height:1px;background:#d2d2d2"></div>
<svg class="a" style="left:900px;top:700px" width="429" height="300" viewBox="900 700 429 300">
<defs><linearGradient id="kb" x1="0" x2="1"><stop offset="0" stop-color="#c9c9c9"/><stop offset="1" stop-color="#fafafa"/></linearGradient>
<linearGradient id="kc" x1="0" x2="0" y1="0" y2="1"><stop offset="0" stop-color="#c9c9c9"/><stop offset="1" stop-color="#f7f7f7"/></linearGradient></defs>
<path d="M962 748.4 H1135.6 V867.9 H1082.4 V917.9 H962 Z" fill="#f5a271"/>
<rect x="1135.6" y="748.4" width="91.1" height="119.5" fill="url(#kb)"/>
<rect x="962" y="917.9" width="120.4" height="46.8" fill="url(#kc)"/>
<path d="M1226.7 748.4 H962 V964.7 M1135.6 748.4 V867.9 M1226.7 867.9 H1082.4 V964.7 M962 917.9 H1082.4 M962 748.4 L1082.4 867.9" fill="none" stroke="#222" stroke-width="1.1"/>
<path d="M1023.5 722.6 V982" fill="none" stroke="#111" stroke-width="1.2" stroke-dasharray="9 3 1.5 3"/>
<path d="M932.3 807.5 H1240" fill="none" stroke="#111" stroke-width="1.2" stroke-dasharray="9 3 1.5 3"/>
<path d="M1226.7 748.4 V803 L1243.8 809 L1212 813 L1226.7 818 V867.9" fill="none" stroke="#f00" stroke-width="2"/>
<path d="M962 964.7 H1016 L1021 948.5 L1022.5 980.8 L1027 964.7 H1082.4" fill="none" stroke="#f00" stroke-width="2"/>
<path d="M1023.6 908.2 H1226.7 M1226.7 888.8 V914.6 M1023.6 888.8 V914.6 M1018.5 913 L1028.5 903.5 M1221.5 913 L1231.5 903.5" fill="none" stroke="#999" stroke-width="1.1"/>
<path d="M1269.6 807.2 V964.7 M1250.2 807.2 H1276 M1250.2 964.7 H1276 M1264.5 802.2 L1274.5 812.2 M1264.5 959.7 L1274.5 969.7" fill="none" stroke="#999" stroke-width="1.1"/>
<text x="1131" y="900" font-family="Liberation Sans" font-size="23.5" fill="#222">L</text><text x="1144" y="904" font-family="Liberation Sans" font-size="15" fill="#222">b</text>
<text x="1282" y="897" font-family="Liberation Sans" font-size="23.5" fill="#222">L</text><text x="1295.5" y="902" font-family="Liberation Sans" font-size="15" fill="#222">c</text>
</svg>
<div class="a" style="left:21px;top:1034px;font-size:11.3px;font-weight:bold;line-height:15px;white-space:nowrap;color:#8a8a8a">Design Code: <span style="color:#fff">EN</span></div>
<div class="a" style="left:141.5px;top:1034px;font-size:11.3px;font-weight:bold;line-height:15px;white-space:nowrap;color:#8a8a8a">Rounding: <span style="color:#fff">Metric</span></div>
<div class="a" style="left:267.5px;top:1034px;font-size:11.3px;font-weight:bold;line-height:15px;white-space:nowrap;color:#8a8a8a">Presentation Units: <span style="color:#fff">Metric</span></div>
<div class="a" style="left:1200px;top:1034px;font-size:12px;line-height:15px;white-space:nowrap;color:#f26f21">www.<span style="color:#fff">ideastatica</span> .com</div>
</div>
</body></html>
